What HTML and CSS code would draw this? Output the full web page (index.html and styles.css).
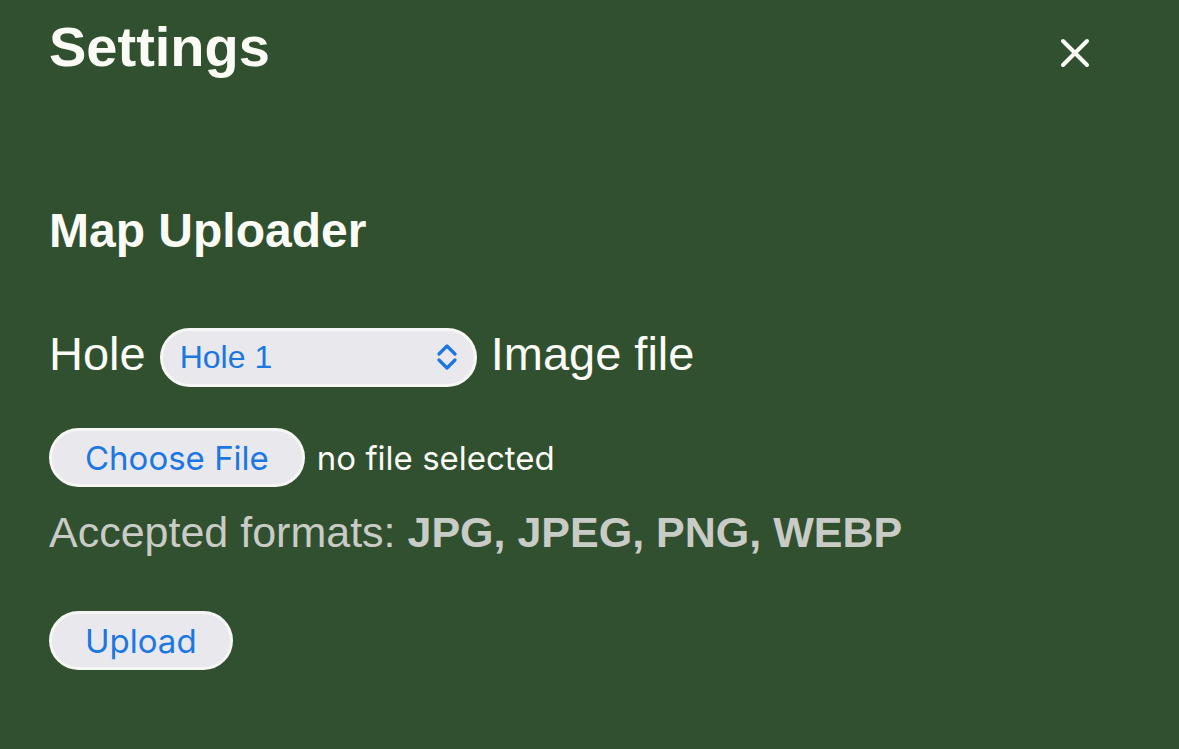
FILE: index.html
```html
<!DOCTYPE html>
<html lang="en">
<head>
  <meta charset="UTF-8">
  <meta name="viewport" content="width=device-width, initial-scale=1.0">
  <title>Settings</title>
  <link rel="stylesheet" href="styles.css">
</head>
<body>
  <div class="settings">
    <header class="settings-head">
      <h3>Settings</h3>
      <button class="close" aria-label="Close">
        <svg width="30" height="30" viewBox="0 0 30 30">
          <path d="M3 3 L27 27 M27 3 L3 27" stroke="#fbfbf6" stroke-width="4" stroke-linecap="round"/>
        </svg>
      </button>
    </header>

    <section class="uploader">
      <h4>Map Uploader</h4>

      <div class="row">
        <label for="hole">Hole</label>
        <div class="select" id="hole">
          <span>Hole 1</span>
          <svg width="22" height="26" viewBox="0 0 22 26">
            <path d="M3 10 L11 2 L19 10 M3 16 L11 24 L19 16" fill="none" stroke="#1c77e0" stroke-width="3.2" stroke-linecap="round" stroke-linejoin="round"/>
          </svg>
        </div>
        <label for="file">Image file</label>
      </div>

      <div class="row file-row">
        <button class="pill">Choose File</button>
        <span class="file-name">no file selected</span>
      </div>

      <p class="hint">Accepted formats: <b>JPG, JPEG, PNG, WEBP</b></p>

      <button class="pill upload">Upload</button>
    </section>
  </div>
</body>
</html>
```

FILE: styles.css
```css
body {
  margin: 0;
  background-color: #31502f;
  color: #fbfbf6;
  font-family: "Liberation Sans", Arial, sans-serif;
}
.settings { padding: 15px 0 0 49px; }

.settings-head {
  display: flex; justify-content: space-between; align-items: flex-start;
}
.settings-head h3 {
  margin: 0; font-size: 56px; line-height: 64px; font-weight: bold;
}
.close {
  background: none; border: none; padding: 0;
  margin: 23px 89px 0 0; width: 30px; height: 30px; cursor: pointer;
}
.close svg { display: block; }

.uploader h4 {
  margin: 124px 0 0; font-size: 48px; line-height: 56px; font-weight: bold;
}

.row {
  display: flex; align-items: center; gap: 14px;
}
.row label { font-size: 47px; line-height: 56px; padding-bottom: 6px; }
.uploader .row:first-of-type { margin-top: 67px; }

.select {
  box-sizing: border-box; width: 317px; height: 59px;
  display: flex; align-items: center; justify-content: space-between;
  padding: 0 16px 0 17px;
  background: #e9e9ed; border: 3px solid #f6f6f4; border-radius: 30px;
  color: #1c77e0; font-size: 32px;
}

.pill {
  box-sizing: border-box; height: 59px; padding: 0 33px;
  background: #e9e9ed; border: 3px solid #f6f6f4; border-radius: 30px;
  color: #1c77e0; font-family: "Inter", "Noto Sans", sans-serif; font-size: 33px;
  cursor: pointer;
}

.file-row { margin-top: 40px; gap: 12px; }
.file-name {
  font-family: "Inter", "Noto Sans", sans-serif; font-size: 33px; color: #fbfbf6;
}

.hint {
  margin: 21px 0 0; font-size: 43px; line-height: 48px; color: #c9ccc6;
}

.upload { margin-top: 55px; display: block; }
```
